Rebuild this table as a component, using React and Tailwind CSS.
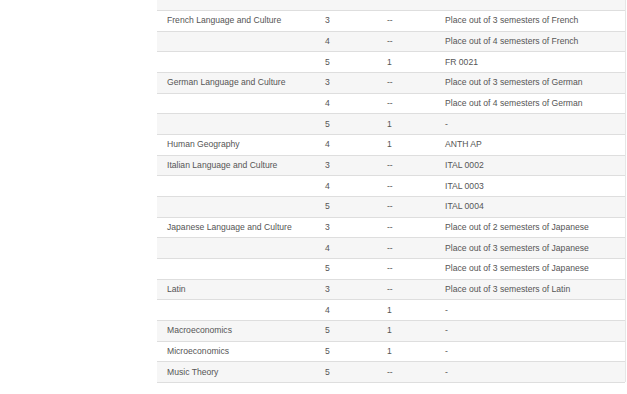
import React from "react";

const rows = [
    ["French Language and Culture", "3", "--", "Place out of 3 semesters of French"],
    ["", "4", "--", "Place out of 4 semesters of French"],
    ["", "5", "1", "FR 0021"],
    ["German Language and Culture", "3", "--", "Place out of 3 semesters of German"],
    ["", "4", "--", "Place out of 4 semesters of German"],
    ["", "5", "1", "-"],
    ["Human Geography", "4", "1", "ANTH AP"],
    ["Italian Language and Culture", "3", "--", "ITAL 0002"],
    ["", "4", "--", "ITAL 0003"],
    ["", "5", "--", "ITAL 0004"],
    ["Japanese Language and Culture", "3", "--", "Place out of 2 semesters of Japanese"],
    ["", "4", "--", "Place out of 3 semesters of Japanese"],
    ["", "5", "--", "Place out of 3 semesters of Japanese"],
    ["Latin", "3", "--", "Place out of 3 semesters of Latin"],
    ["", "4", "1", "-"],
    ["Macroeconomics", "5", "1", "-"],
    ["Microeconomics", "5", "1", "-"],
    ["Music Theory", "5", "--", "-"],
];

export default function App() {
    return (
        <div className="w-[627px] h-[394px] bg-white overflow-hidden" style={{ fontFamily: '"Liberation Sans", Arial, sans-serif' }}>
            <div className="ml-[157px] w-[469px] border-r border-[#e6e6e6]">
                <div className="h-[10px] bg-[#f6f6f6]" />
                <table className="w-full border-collapse table-fixed text-[8.6px] text-[#555]">
                    <colgroup>
                        <col className="w-[158px]" />
                        <col className="w-[62px]" />
                        <col className="w-[58px]" />
                        <col />
                    </colgroup>
                    <tbody>
                        {rows.map((r, i) => (
                            <tr
                                key={i}
                                className={`h-[20.67px] border-t border-[#dedede] ${i % 2 === 1 ? "bg-[#f6f6f6]" : "bg-white"}`}
                            >
                                {r.map((c, j) => (
                                    <td key={j} className="px-[10px] py-0 align-middle whitespace-nowrap">
                                        {c}
                                    </td>
                                ))}
                            </tr>
                        ))}
                        <tr className="border-t border-[#dedede]" />
                    </tbody>
                </table>
            </div>
        </div>
    );
}
